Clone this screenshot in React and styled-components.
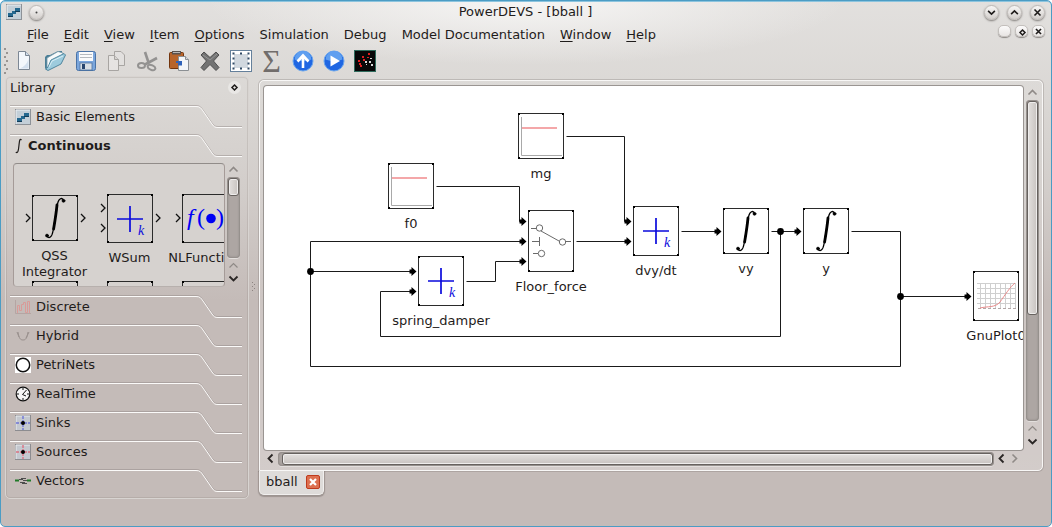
import React from "react";
import styled, { createGlobalStyle } from "styled-components";

const GlobalStyle = createGlobalStyle`
  *, *::before, *::after { box-sizing: border-box; }
  body {
    margin: 0;
    background: #fff;
    color: #1f1c1b;
    font: 13px/16px "DejaVu Sans", Verdana, sans-serif;
  }
  button {
    margin: 0;
    padding: 0;
    border: 0;
    background: none;
    color: inherit;
    font: inherit;
    cursor: default;
  }
  h1, h2, p { margin: 0; font: inherit; }
  svg { display: block; flex: none; }
`;

const Window = styled.div`
  display: flex;
  flex-direction: column;
  min-height: 100vh;
  overflow: hidden;
  border: 1px solid #4b9cc4;
  border-radius: 5px;
  background:
    radial-gradient(ellipse 320px 64px at 50% 0, #f6f5f4 0%, rgba(246, 245, 244, 0) 100%),
    linear-gradient(#e2e0de 0, #dad7d4 100px, #d2cdca 190px, #c4bbb8 300px);
  box-shadow: inset 0 1px #8cc4de;
`;

const TitleBar = styled.header`
  display: grid;
  grid-template-columns: 1fr auto 1fr;
  align-items: center;
  height: 22px;
  padding: 0 6px 0 5px;
`;

const Cluster = styled.div`
  display: flex;
  align-items: center;
  gap: ${(p) => p.$gap}px;
  justify-content: ${(p) => (p.$end ? "flex-end" : "flex-start")};
`;

const RoundButton = styled.button`
  display: grid;
  place-items: center;
  width: 15px;
  height: 15px;
  border: 1px solid #bdb9b6;
  border-radius: 50%;
  background: linear-gradient(#f7f6f5, #d3cfcc);
  box-shadow: 0 1px 2px #7f7b78;
`;

const MenuRow = styled.div`
  display: flex;
  align-items: center;
  height: 23px;
  padding: 0 6px 0 18px;
`;

const MenuList = styled.nav`
  display: flex;
  flex: 1;
`;

const MenuButton = styled.button`
  padding: 0 7px 0 8px;
  line-height: 20px;
  white-space: nowrap;
  u { text-underline-offset: 2px; }
`;

const SmallButton = styled.button`
  display: grid;
  place-items: center;
  width: 13px;
  height: 12px;
  margin: 0 0 8px;
  border: 1px solid #c3bfbc;
  border-radius: 5px;
  background: linear-gradient(#fbfafa, #e8e5e3);
  box-shadow: 0 1px 1px #8f8b88;
`;

const ToolBar = styled.div`
  display: flex;
  align-items: center;
  height: 30px;
  padding-left: 3px;
`;

const ToolButton = styled.button`
  display: grid;
  place-items: center;
  width: 31px;
  height: 26px;
  &:disabled { opacity: 0.6; }
`;

const Body = styled.div`
  display: flex;
  flex: 1;
  padding: 0 8px 27px 4px;
`;

const Dock = styled.aside`
  display: flex;
  flex-direction: column;
  width: 244px;
  padding: 0 6px 0 4px;
  border: 1px solid #d8d4d1;
  border-radius: 5px;
  box-shadow: inset 0 0 0 1px rgba(110, 100, 96, 0.16);
`;

const DockTitle = styled.div`
  display: flex;
  align-items: center;
  justify-content: space-between;
  height: 28px;
  padding: 0 1px 7px 0;
`;

const FloatButton = styled.button`
  display: grid;
  place-items: center;
  width: 13px;
  height: 13px;
  border-radius: 50%;
  background: #e9e7e5;
`;

const SectionButton = styled.button`
  position: relative;
  display: flex;
  align-items: center;
  gap: 5px;
  width: 100%;
  height: 29px;
  padding: 0 0 5px 5px;
  text-align: left;
  font-weight: ${(p) => (p.$open ? 700 : 400)};
`;

const Outline = styled.svg`
  position: absolute;
  left: 0;
  top: 0;
`;

const Shelf = styled.div`
  display: flex;
  gap: 1px;
  height: 124px;
  margin: 0 0 8px 3px;
`;

const Palette = styled.div`
  flex: none;
  width: 212px;
  overflow: hidden;
  padding: 30px 3px 0;
  border: 1px solid #9a9592;
  border-color: #918c89 #a59b98 #b7b0ad;
  border-radius: 4px;
  background: #d6d2cf;
`;

const PaletteGrid = styled.div`
  display: grid;
  grid-template-columns: repeat(3, 75px);
  row-gap: 1px;
`;

const PaletteItem = styled.div`
  display: flex;
  flex-direction: column;
  align-items: center;
  gap: 7px;
  text-align: center;
`;

const ScrollBar = styled.div`
  display: flex;
  flex: none;
  align-items: center;
  flex-direction: ${(p) => (p.$horizontal ? "row" : "column")};
  ${(p) =>
    p.$horizontal
      ? "height: 17px; padding: 1px 19px 1px 0;"
      : "width: 15px; padding-bottom: 2px;"}
`;

const Arrow = styled.button`
  display: grid;
  flex: none;
  place-items: center;
  width: 13px;
  height: 13px;
  color: ${(p) => (p.$dim ? "#8f8a87" : "#2a2625")};
`;

const Groove = styled.div`
  display: flex;
  flex: 1;
  padding: 1px;
  border-radius: 4px;
  background: #ada6a3;
  box-shadow: inset 0 0 2px 1px #8f8986, 0 1px #e3dfdd;
  ${(p) =>
    p.$horizontal
      ? "height: 14px; margin: 0 1px; padding-left: 4px;"
      : "width: 13px; margin: 1px 0; flex-direction: column;"}
`;

const Thumb = styled.div`
  flex: 0 0 ${(p) => p.$size};
  border: 1px solid #67625f;
  border-radius: 3px;
  background: linear-gradient(${(p) => (p.$horizontal ? "180deg" : "90deg")}, #e3e0de, #c8c3c0);
  box-shadow: inset 0 0 0 1px #efedec;
`;

const Splitter = styled.div`
  display: grid;
  place-items: center;
  flex: none;
  width: 10px;
`;

const Workspace = styled.main`
  display: flex;
  flex: 1;
  flex-direction: column;
  min-width: 0;
  padding: 4px 0;
`;

const Frame = styled.section`
  display: flex;
  flex: 1;
  flex-direction: column;
  padding: 5px 2px 3px 4px;
  border: 1px solid #f8f7f6;
  border-radius: 5px 5px 5px 0;
  background: linear-gradient(rgba(255, 255, 255, 0.04), rgba(255, 255, 255, 0.25));
  box-shadow: 0 0 0 1px rgba(120, 112, 108, 0.3);
`;

const Viewport = styled.div`
  display: flex;
  flex: 1;
  gap: 2px;
`;

const Canvas = styled.div`
  position: relative;
  flex: 1;
  overflow: hidden;
  border-radius: 3px;
  background: #fff;
  box-shadow: 0 0 0 1px #9a9592;
`;

const Wires = styled.svg`
  position: absolute;
  left: 0;
  top: 0;
`;

const Node = styled.figure`
  position: absolute;
  left: ${(p) => p.$x}px;
  top: ${(p) => p.$y}px;
  display: flex;
  flex-direction: column;
  align-items: center;
  gap: 7px;
  width: 46px;
  margin: 0;
  white-space: nowrap;
`;

const DocumentTab = styled.div`
  display: flex;
  align-items: center;
  align-self: flex-start;
  gap: 8px;
  height: 24px;
  padding: 0 3px 2px 6px;
  border: 1px solid #f1efee;
  border-top: 0;
  border-radius: 0 0 5px 5px;
  background: #dedbd9;
  box-shadow: 0 1px 1px 1px rgba(110, 102, 98, 0.45);
  clip-path: inset(0 -3px -3px -3px);
`;

const CloseButton = styled.button`
  display: grid;
  place-items: center;
  width: 14px;
  height: 14px;
  border: 1px solid #bf3a1c;
  border-radius: 2px;
  background: #dd6f4f;
`;

/* ---------- block drawings ---------- */

const BLUE = "#0a0adc";

const Box = ({ w = 46, h }) => (
  <g>
    <rect x=".5" y=".5" width={w - 1} height={h - 1} fill="none" stroke="#2b2b2b" />
    {[[0, 0], [w - 2, 0], [0, h - 2], [w - 2, h - 2]].map(([x, y]) => (
      <rect key={`${x},${y}`} x={x} y={y} width="2" height="2" fill="#000" />
    ))}
  </g>
);

const Integral = () => (
  <g fill="none" stroke="#000" strokeLinecap="round">
    <path d="M31.500 6C31 2.500 27 2 25.500 9C24.500 14 22.500 28 21 36C20 42.500 17 44 14.700 41" strokeWidth="1.300" />
    <path d="M25 10C24.300 17 22.800 27 21.600 34" strokeWidth="2.800" />
    <circle cx="31.500" cy="5.800" r="1.500" fill="#000" strokeWidth=".6" />
    <circle cx="15" cy="40.600" r="1.500" fill="#000" strokeWidth=".6" />
  </g>
);

const PlusK = () => (
  <g>
    <path d="M10 25H36M23 12V38" stroke={BLUE} strokeWidth="1.700" />
    <text x="31" y="41" fill={BLUE} fontFamily="Liberation Serif, serif" fontStyle="italic" fontSize="14">k</text>
  </g>
);

const FuncDot = () => (
  <g fill="#0000f5" fontFamily="Liberation Serif, serif" fontSize="24">
    <text x="5" y="31" fontStyle="italic">f</text>
    <text x="15" y="31">(</text>
    <circle cx="29" cy="24.500" r="4.800" />
    <text x="34" y="31">)</text>
  </g>
);

const Constant = () => (
  <g fill="none">
    <path d="M3.500 4V42.500H44" stroke="#a9a9a9" />
    <path d="M4 15H39" stroke="#f08a8d" strokeWidth="1.600" />
  </g>
);

const Switch = () => (
  <g fill="#fff" stroke="#6a6a6a">
    <path d="M3 18.500H8M4 31.500H11.500M11.500 27V36M5 43.500H10M13 21L31 31M37 31.500H43" />
    <circle cx="11.500" cy="18" r="3.200" />
    <circle cx="13.500" cy="43.500" r="3.200" />
    <circle cx="34.500" cy="32" r="3.200" />
  </g>
);

const Plot = () => (
  <g fill="none">
    <path
      d="M7.500 12V37M12.500 12V37M17.500 12V37M22.500 12V37M27.500 12V37M32.500 12V37M37.500 12V37M42.500 12V37M4 12.500H43M4 17.500H43M4 22.500H43M4 27.500H43M4 32.500H43"
      stroke="#cfcfcf"
    />
    <path d="M5 37.500H43" stroke="#b2a7a7" strokeDasharray="3 2" />
    <path d="M7 37C15 35 22 37 27 31C32 24 37 16 42 12" stroke="#e98b8b" />
  </g>
);

const drawings = {
  constant: Constant,
  switch: Switch,
  sum: PlusK,
  integral: Integral,
  plot: Plot,
};

const nodes = [
  { name: "mg", kind: "constant", x: 254, y: 27, h: 46 },
  { name: "f0", kind: "constant", x: 124, y: 77, h: 46 },
  { name: "Floor_force", kind: "switch", x: 264, y: 124, h: 62 },
  { name: "spring_damper", kind: "sum", x: 154, y: 170, h: 50 },
  { name: "dvy/dt", kind: "sum", x: 369, y: 120, h: 50 },
  { name: "vy", kind: "integral", x: 459, y: 122, h: 46 },
  { name: "y", kind: "integral", x: 539, y: 122, h: 46 },
  { name: "GnuPlot0", kind: "plot", x: 709, y: 185, h: 50 },
];

const wires = [
  "M173 100H256V135H258",
  "M303 50H361V135H363",
  "M588 145H637V280H47V155H258",
  "M47 185H148",
  "M637 210H703",
  "M203 195H232V175H258",
  "M508 145H533",
  "M517 145V250H117V205H148",
  "M418 145H453",
  "M313 155H363",
];

const arrowTips = [
  [262, 135], [367, 135], [262, 155], [152, 185], [707, 210], [262, 175],
  [537, 145], [152, 205], [457, 145], [367, 155],
];

const junctions = [[47, 185], [637, 210], [517, 145]];

const Diagram = () => (
  <Canvas>
    <Wires width="760" height="364" aria-hidden="true">
      <g transform="translate(-.5 .5)">
        <path d={wires.join("")} fill="none" stroke="#1a1a1a" />
        {arrowTips.map(([x, y]) => (
          <path key={`${x},${y}`} d={`M${x + 1} ${y}L${x - 4} ${y - 4.5}V${y - 2}H${x - 6}V${y + 2}H${x - 4}V${y + 4.5}Z`} />
        ))}
        {junctions.map(([x, y]) => <circle key={`${x},${y}`} cx={x} cy={y} r="3.400" />)}
      </g>
    </Wires>
    {nodes.map(({ name, kind, x, y, h }) => {
      const Drawing = drawings[kind];
      return (
        <Node key={name} $x={x} $y={y}>
          <svg width="46" height={h} aria-hidden="true">
            <Drawing />
            <Box h={h} />
          </svg>
          <figcaption>{name}</figcaption>
        </Node>
      );
    })}
  </Canvas>
);

/* ---------- small glyphs ---------- */

const chevrons = {
  up: "M2.500 8.500L6.500 4.500L10.500 8.500",
  down: "M2.500 4.500L6.500 8.500L10.500 4.500",
  left: "M8.500 2.500L4.500 6.500L8.500 10.500",
  right: "M4.500 2.500L8.500 6.500L4.500 10.500",
  close: "M3.500 3.500L9.500 9.500M9.500 3.500L3.500 9.500",
  diamond: "M6.500 4L9 6.500L6.500 9L4 6.500Z",
};

const Glyph = ({ kind, width = 1.6, size = 13 }) => (
  <svg width={size} height={size} viewBox="0 0 13 13" aria-hidden="true">
    <path d={chevrons[kind]} fill="none" stroke="currentColor" strokeWidth={width} />
  </svg>
);

const BlocksIcon = () => (
  <svg width="16" height="16" aria-hidden="true">
    <rect x=".5" y=".5" width="15" height="15" fill="#c3cfd8" stroke="#8d9298" />
    <path d="M1 15V1H15" fill="none" stroke="#eef1f3" />
    <path d="M2 9H7V13H2ZM9 4H14V8H9ZM6 7H10V10H6Z" fill="#24688f" />
    <path d="M2 12H7V13H2ZM9 7H14V8H9Z" fill="#123c58" />
  </svg>
);

const NewIcon = () => (
  <svg width="22" height="22" aria-hidden="true">
    <path d="M5.500 1.500H12.500L16.500 5.500V19.500H5.500Z" fill="#f3f7fc" stroke="#7c8794" />
    <path d="M12.500 1.500V5.500H16.500" fill="#cfdcea" stroke="#7c8794" />
    <path d="M7 18.500C11 17 14 14 15.500 9V18.500H7Z" fill="#d3e0ef" />
  </svg>
);

const OpenIcon = () => (
  <svg width="22" height="22" aria-hidden="true">
    <path d="M1 7L3 5H6L14 1L18 1V5L10 17L3 20L1 18Z" fill="#4b7f97" />
    <path d="M3 8L14 1.500L19 3L18 8L7 14L3 18Z" fill="#f7fafb" stroke="#7899a8" strokeWidth=".8" />
    <path d="M4 17L7 10L20 3.500L21.500 5L17 14L4 20.500L1.500 19Z" fill="#9dcbdd" stroke="#457d96" strokeWidth=".9" />
    <path d="M5 17L8 11L19 6" fill="none" stroke="#d9eff6" />
  </svg>
);

const SaveIcon = () => (
  <svg width="22" height="22" aria-hidden="true">
    <rect x="1.500" y="1.500" width="19" height="19" rx="2" fill="#7ba6dc" stroke="#4a73a6" />
    <rect x="4" y="2" width="14" height="9" fill="#fafbfc" />
    <path d="M5 4.500H17M5 7.500H17" stroke="#b5bac0" />
    <rect x="5" y="13" width="12" height="7" fill="#d9dfe5" stroke="#4f719e" strokeWidth=".8" />
    <rect x="7" y="14" width="3" height="5" fill="#27456e" />
  </svg>
);

const CopyIcon = () => (
  <svg width="22" height="22" aria-hidden="true">
    <path d="M8.500 1.500H15L18.500 5V15.500H8.500Z" fill="#e6e4e3" stroke="#85827f" />
    <path d="M2.500 5.500H8.500L12.500 9.500V20.500H2.500Z" fill="#eceae9" stroke="#85827f" />
    <path d="M8.500 5.500V9.500H12.500" fill="#d3d0ce" stroke="#85827f" />
  </svg>
);

const CutIcon = () => (
  <svg width="22" height="22" fill="none" stroke="#636363" aria-hidden="true">
    <path d="M8 2L12 14M20 8L8 14.500" strokeWidth="2.600" />
    <ellipse cx="4.500" cy="15.500" rx="3.500" ry="2.500" strokeWidth="2" />
    <ellipse cx="14.500" cy="17.500" rx="4" ry="2.300" strokeWidth="2" transform="rotate(25 14.500 17.500)" />
  </svg>
);

const PasteIcon = () => (
  <svg width="22" height="22" aria-hidden="true">
    <rect x="1.500" y="2.500" width="14" height="16" rx="1" fill="#b8642a" stroke="#73350d" />
    <path d="M4 1H13V4.500H4Z" fill="#5a5350" />
    <path d="M5 2.500H12" stroke="#b9b5b3" />
    <path d="M10.500 6.500H17.500L20.500 9.500V20.500H10.500Z" fill="#f4f6f8" stroke="#8b8f93" />
    <path d="M17.500 6.500V9.500H20.500" fill="#d5dbe2" stroke="#8b8f93" />
    <path d="M8 11H14V15.500H10V13H8Z" fill="#2f62b9" />
  </svg>
);

const DeleteIcon = () => (
  <svg width="22" height="22" aria-hidden="true">
    <path d="M2 5L5 2L11 7.500L17 2L20 5L14.500 11L20 17.500L17 20.500L11 14.500L5 20.500L2 17.500L7.500 11Z" fill="#727272" stroke="#4e4e4e" />
    <path d="M4 5L11 10L18 4" fill="none" stroke="#959595" />
  </svg>
);

const SelectIcon = () => (
  <svg width="22" height="22" aria-hidden="true">
    <rect x=".5" y=".5" width="21" height="21" fill="#fff" stroke="#65809b" />
    <rect x="4" y="4" width="14" height="14" fill="#d1d8df" />
    <path
      d="M2.500 3.500H4.500M10 3.500H12M17.500 3.500H19.500M2.500 18.500H4.500M10 18.500H12M17.500 18.500H19.500M2.500 8.500H4.500M2.500 13.500H4.500M17.500 8.500H19.500M17.500 13.500H19.500"
      stroke="#304a66"
      strokeWidth="2"
    />
  </svg>
);

const Sigma = styled.span`
  color: #716d6b;
  font: 32px/22px "Liberation Serif", serif;
`;

const SigmaIcon = () => <Sigma aria-hidden="true">Σ</Sigma>;

const RoundIcon = ({ children }) => (
  <svg width="22" height="22" aria-hidden="true">
    <circle cx="11" cy="11" r="10" fill="#1f66e2" stroke="#6ba6ec" />
    <path d="M2.500 9.500A8.500 8.500 0 0 1 19.500 9.500Q11 13 2.500 9.500" fill="#5f9ff0" />
    {children}
  </svg>
);

const UpIcon = () => (
  <RoundIcon>
    <path d="M11 18V6M5.500 11.500L11 5.500L16.500 11.500" fill="none" stroke="#fff" strokeWidth="2.600" />
  </RoundIcon>
);

const PlayIcon = () => (
  <RoundIcon>
    <path d="M7.500 5.500L17 11L7.500 16.500Z" fill="#fff" />
  </RoundIcon>
);

const ScatterIcon = () => (
  <svg width="22" height="22" aria-hidden="true">
    <rect x=".5" y=".5" width="21" height="21" fill="#080808" stroke="#2f6b5c" />
    <path d="M4 10H6V12H4ZM5 13H7V15H5ZM9 9H11V11H9ZM8 6H10V8H8ZM14 3H16V5H14ZM6 15H8V17H6ZM13 7H15V8H13Z" fill="#e01f1f" />
    <path d="M11 11H13V13H11ZM12 14H13V15H12ZM15 11H17V13H15ZM17 14H19V16H17ZM16 8H18V9H16Z" fill="#d9d9d9" />
  </svg>
);

const Grip = () => (
  <svg width="4" height="26" fill="#989491" aria-hidden="true">
    {[0, 4, 8, 12, 16, 20, 24].map((y, i) => (
      <rect key={y} x={i % 2 ? 2 : 0} y={y} width="2" height="2" />
    ))}
  </svg>
);

const tools = [
  { label: "New", icon: NewIcon },
  { label: "Open", icon: OpenIcon },
  { label: "Save", icon: SaveIcon },
  { label: "Copy", icon: CopyIcon, disabled: true },
  { label: "Cut", icon: CutIcon, disabled: true },
  { label: "Paste", icon: PasteIcon },
  { label: "Delete", icon: DeleteIcon },
  { label: "Select all", icon: SelectIcon },
  { label: "Edit priorities", icon: SigmaIcon },
  { label: "Go up", icon: UpIcon },
  { label: "Simulate", icon: PlayIcon },
  { label: "Scilab", icon: ScatterIcon },
];

const menus = [
  ["F", "ile"], ["E", "dit"], ["V", "iew"], ["I", "tem"], ["O", "ptions"],
  ["", "Simulation"], ["", "Debug"], ["", "Model Documentation"], ["W", "indow"], ["H", "elp"],
];

/* ---------- library ---------- */

const SmallIntegral = () => (
  <svg width="8" height="16" fill="none" stroke="#1f1c1b" aria-hidden="true">
    <path d="M6.500 2C4.500 0 4.500 3 4 7C3.500 12 3 16 .8 14" strokeWidth="1.200" />
  </svg>
);

const DiscreteIcon = () => (
  <svg width="16" height="16" fill="none" aria-hidden="true">
    <path d="M.5 1V14.500H16" stroke="#b5a5a3" />
    <path d="M2.500 14V6.500H4.500V11.500H6.500V5.500H8.500V3.500H10.500V13.500H12.500V2.500H14.500V14" stroke="#d99a98" />
  </svg>
);

const HybridIcon = () => (
  <svg width="16" height="16" fill="none" stroke="#9a918e" aria-hidden="true">
    <path d="M3 4C4 10 5 12 8 12S12 10 13 4M2 4L4 9M14 4L11 10" />
  </svg>
);

const PetriIcon = () => (
  <svg width="16" height="16" aria-hidden="true">
    <rect width="16" height="16" fill="#fff" />
    <circle cx="8" cy="8" r="6.700" fill="#fff" stroke="#111" strokeWidth="1.500" />
  </svg>
);

const ClockIcon = () => (
  <svg width="16" height="16" fill="none" stroke="#111" aria-hidden="true">
    <circle cx="8" cy="8" r="6.800" fill="#f6f6f6" strokeWidth="1.200" />
    <path d="M11.500 4L7.500 8.500L11 10M8 2V4M8 12V14M2 8H4M12 8H14" />
  </svg>
);

const PinIcon = ({ color }) => (
  <svg width="16" height="16" aria-hidden="true">
    <rect x=".5" y=".5" width="15" height="15" fill="#c4c8cf" stroke="#8c8c90" />
    <path d="M1 15V1H15" fill="none" stroke="#e9ebee" />
    <path d="M8 1V15M1 8H15" stroke={color} strokeDasharray="3 1" strokeWidth="1.400" />
    <circle cx="8" cy="8" r="2" fill="#000" />
  </svg>
);

const SinkIcon = () => <PinIcon color="#6f74d8" />;
const SourceIcon = () => <PinIcon color="#dc7080" />;

const VectorIcon = () => (
  <svg width="16" height="16" fill="none" aria-hidden="true">
    <path d="M0 7.500H4M12 7.500H16" stroke="#1f7a27" strokeWidth="2" />
    <path d="M4 6.500H8M6 5.500H11M5 9.500H10M7 10.500H12M8 7.500H12" stroke="#4d4d4d" />
  </svg>
);

const sections = [
  { name: "Basic Elements", icon: BlocksIcon },
  { name: "Continuous", icon: SmallIntegral, open: true },
  { name: "Discrete", icon: DiscreteIcon },
  { name: "Hybrid", icon: HybridIcon },
  { name: "PetriNets", icon: PetriIcon },
  { name: "RealTime", icon: ClockIcon },
  { name: "Sinks", icon: SinkIcon },
  { name: "Sources", icon: SourceIcon },
  { name: "Vectors", icon: VectorIcon },
];

const TAB_EDGE = "M0 1.500H186C190 1.500 191 3 193 6L202 19C204 22 205 22.500 208 22.500H232";

const Section = ({ name, icon: Icon, open }) => (
  <SectionButton $open={open} aria-expanded={!!open}>
    <Outline width="232" height="24" fill="none" aria-hidden="true">
      <path d={TAB_EDGE} stroke="#8d8582" strokeOpacity=".45" transform="translate(0 -1)" />
      <path d={TAB_EDGE} stroke="#fbfaf9" />
    </Outline>
    <Icon />
    {name}
  </SectionButton>
);

const Port = ({ x, y }) => (
  <path d={`M${x} ${y - 4}L${x + 4} ${y}L${x} ${y + 4}`} fill="none" stroke="#111" strokeWidth="1.300" />
);

const PaletteBlock = ({ label, height, top = 0, inputs = [], outputs = [], children }) => (
  <PaletteItem>
    <svg width="74" height={height} aria-hidden="true">
      {inputs.map((y) => <Port key={y} x={8} y={y} />)}
      {outputs.map((y) => <Port key={y} x={63} y={y} />)}
      <g transform={`translate(14 ${top})`}>
        {children}
        <Box h={height - top} />
      </g>
    </svg>
    {label}
  </PaletteItem>
);

const Library = () => (
  <Dock aria-label="Library">
    <DockTitle>
      <h2>Library</h2>
      <FloatButton aria-label="Float panel"><Glyph kind="diamond" width={1.5} /></FloatButton>
    </DockTitle>
    {sections.map((section) => (
      <React.Fragment key={section.name}>
        <Section {...section} />
        {section.open && (
          <Shelf>
            <Palette>
              <PaletteGrid>
                <PaletteBlock label="QSS Integrator" height={47} top={1} inputs={[24]} outputs={[24]}><Integral /></PaletteBlock>
                <PaletteBlock label="WSum" height={49} inputs={[14, 34]} outputs={[24]}><PlusK /></PaletteBlock>
                <PaletteBlock label="NLFunction" height={49} inputs={[24]} outputs={[24]}><FuncDot /></PaletteBlock>
                <PaletteBlock height={46} />
                <PaletteBlock height={46} />
                <PaletteBlock height={46} />
              </PaletteGrid>
            </Palette>
            <ScrollBar>
              <Arrow $dim aria-label="Scroll up"><Glyph kind="up" /></Arrow>
              <Groove><Thumb $size="18px" /></Groove>
              <Arrow $dim aria-label="Scroll up"><Glyph kind="up" width={1.2} /></Arrow>
              <Arrow aria-label="Scroll down"><Glyph kind="down" width={1.8} /></Arrow>
            </ScrollBar>
          </Shelf>
        )}
      </React.Fragment>
    ))}
  </Dock>
);

export default function App() {
  return (
    <>
      <GlobalStyle />
      <Window>
        <TitleBar>
          <Cluster $gap={7}>
            <BlocksIcon />
            <RoundButton aria-label="On all desktops">
              <svg width="3" height="3" aria-hidden="true"><circle cx="1.500" cy="1.500" r="1" fill="#444" /></svg>
            </RoundButton>
          </Cluster>
          <h1>PowerDEVS - [bball ]</h1>
          <Cluster $gap={8} $end>
            <RoundButton aria-label="Minimize"><Glyph kind="down" size={11} width={1.9} /></RoundButton>
            <RoundButton aria-label="Maximize"><Glyph kind="up" size={11} width={1.9} /></RoundButton>
            <RoundButton aria-label="Close"><Glyph kind="close" /></RoundButton>
          </Cluster>
        </TitleBar>

        <MenuRow>
          <MenuList aria-label="Main menu">
            {menus.map(([key, rest]) => (
              <MenuButton key={key + rest}>{key && <u>{key}</u>}{rest}</MenuButton>
            ))}
          </MenuList>
          <Cluster $gap={4} $end>
            <SmallButton aria-label="Minimize document" />
            <SmallButton aria-label="Restore document"><Glyph kind="diamond" width={1.5} /></SmallButton>
            <SmallButton aria-label="Close document"><Glyph kind="close" size={11} width={1.9} /></SmallButton>
          </Cluster>
        </MenuRow>

        <ToolBar role="toolbar" aria-label="Main toolbar">
          <Grip />
          {tools.map(({ label, icon: Icon, disabled }) => (
            <ToolButton key={label} aria-label={label} disabled={disabled}><Icon /></ToolButton>
          ))}
        </ToolBar>

        <Body>
          <Library />
          <Splitter>
            <svg width="4" height="11" fill="#8c8380" aria-hidden="true">
              <path d="M0 0H1V1H0ZM2 2H3V3H2ZM0 4H1V5H0ZM2 6H3V7H2ZM0 8H1V9H0Z" />
            </svg>
          </Splitter>
          <Workspace>
            <Frame aria-label="Model editor">
              <Viewport>
                <Diagram />
                <ScrollBar>
                  <Arrow $dim aria-label="Scroll up"><Glyph kind="up" /></Arrow>
                  <Groove><Thumb $size="67%" /></Groove>
                  <Arrow $dim aria-label="Scroll up"><Glyph kind="up" width={1.2} /></Arrow>
                  <Arrow aria-label="Scroll down"><Glyph kind="down" width={1.8} /></Arrow>
                </ScrollBar>
              </Viewport>
              <ScrollBar $horizontal>
                <Arrow aria-label="Scroll left"><Glyph kind="left" width={1.8} /></Arrow>
                <Groove $horizontal><Thumb $horizontal $size="100%" /></Groove>
                <Arrow aria-label="Scroll left"><Glyph kind="left" width={1.8} /></Arrow>
                <Arrow $dim aria-label="Scroll right"><Glyph kind="right" /></Arrow>
              </ScrollBar>
            </Frame>
            <DocumentTab>
              bball
              <CloseButton aria-label="Close bball">
                <svg width="10" height="10" aria-hidden="true">
                  <path d="M2 2L8 8M8 2L2 8" stroke="#fff" strokeWidth="2.200" />
                </svg>
              </CloseButton>
            </DocumentTab>
          </Workspace>
        </Body>
      </Window>
    </>
  );
}
